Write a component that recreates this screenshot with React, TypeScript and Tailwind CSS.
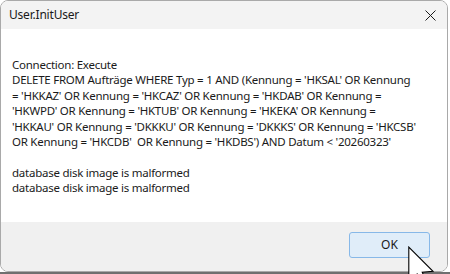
const lines = [
  "Connection: Execute",
  "DELETE FROM Aufträge WHERE Typ = 1 AND (Kennung = 'HKSAL' OR Kennung",
  "= 'HKKAZ' OR Kennung = 'HKCAZ' OR Kennung = 'HKDAB' OR Kennung =",
  "'HKWPD' OR Kennung = 'HKTUB' OR Kennung = 'HKEKA' OR Kennung =",
  "'HKKAU' OR Kennung = 'DKKKU' OR Kennung = 'DKKKS' OR Kennung = 'HKCSB'",
  "OR Kennung = 'HKCDB'  OR Kennung = 'HKDBS') AND Datum < '20260323'",
  "",
  "database disk image is malformed",
  "database disk image is malformed",
]

const App = () => {
  return (
    <div className="relative w-[450px] h-[274px] bg-white overflow-hidden flex flex-col font-['Noto_Sans',sans-serif] text-[#1a1a1a]">
      <div className="w-[448px] h-[272px] border border-[#a9a9a9] rounded-[8px] overflow-hidden flex flex-col">
        <div className="h-[28px] bg-[#f3f3f3] flex items-center justify-between pl-[8px] pr-[10px]">
          <span className="text-[12px] leading-none tracking-[-0.2px]">User.InitUser</span>
          <svg width="11" height="11" viewBox="0 0 11 11" className="mr-[1px]">
            <path d="M0.5 0.5 L10.5 10.5 M10.5 0.5 L0.5 10.5" stroke="#1a1a1a" strokeWidth="1" fill="none" />
          </svg>
        </div>
        <div className="flex-1 bg-white pt-[28px] pl-[11px]">
          {lines.map((l, i) => (
            <div key={i} className="text-[11.5px] leading-[15.4px] h-[15.4px] whitespace-pre tracking-[-0.25px]">
              {l}
            </div>
          ))}
        </div>
        <div className="h-[49px] bg-[#f0f0f0] flex justify-end pt-[10px] pr-[17px]">
          <button className="w-[81px] h-[26px] rounded-[3px] border border-[#87b8e8] bg-[#e0edf9] text-[12px] text-[#1a1a1a]">
            OK
          </button>
        </div>
      </div>
      <div className="flex-1 bg-[#6f6f6f]" />
      <svg width="30" height="44" viewBox="0 0 13 20" className="absolute left-[407px] top-[246px]">
        <path d="M0.5 0.5 L0.5 16.5 L4.3 12.7 L7 18.6 L9.2 17.6 L6.6 11.9 L11.5 11.5 Z" fill="white" stroke="black" strokeWidth="0.5" strokeLinejoin="miter" />
      </svg>
    </div>
  )
}

export default App
